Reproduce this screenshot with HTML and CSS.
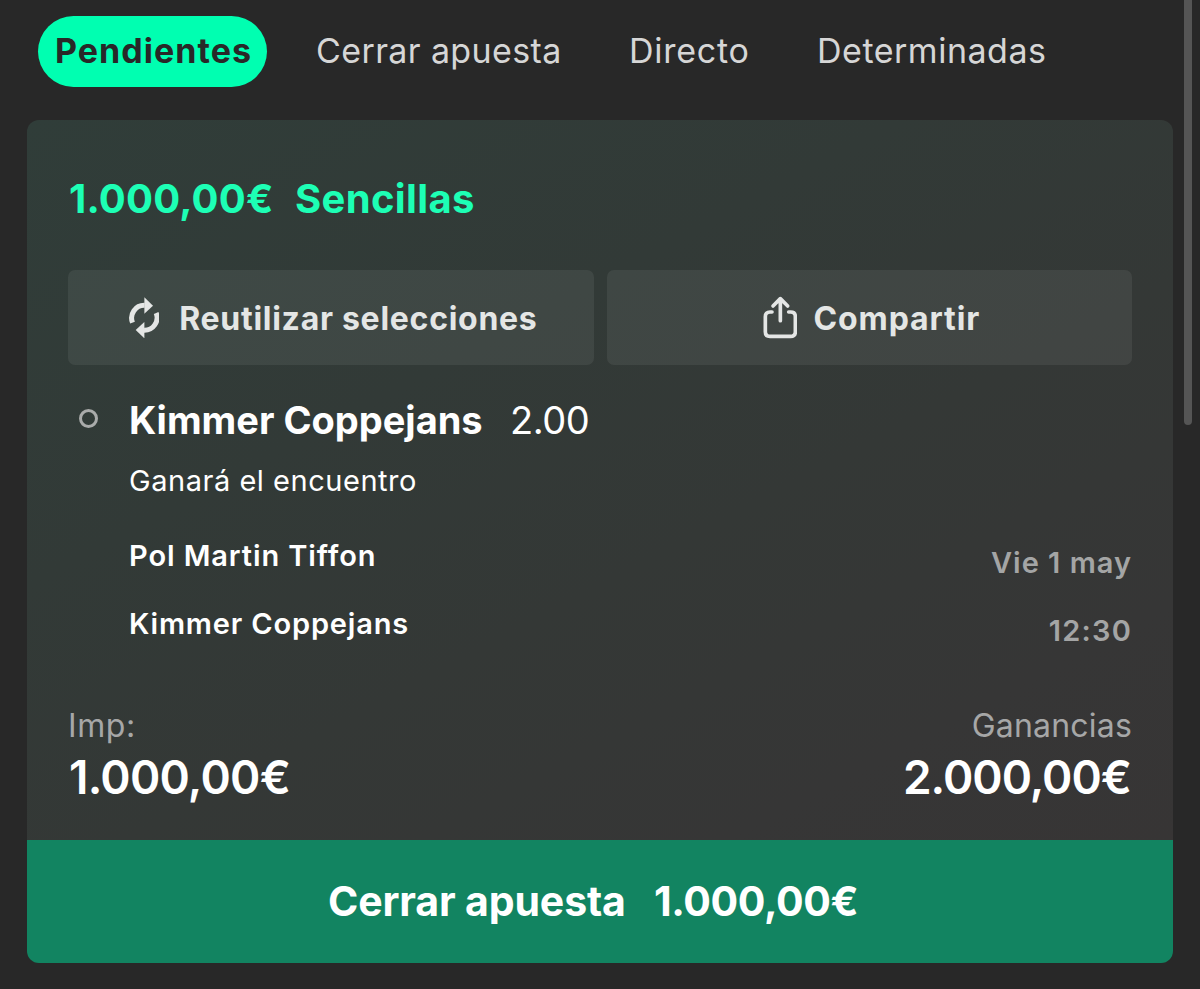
FILE: index.html
```html
<!DOCTYPE html>
<html lang="es">
<head>
<meta charset="utf-8">
<title>Mis apuestas</title>
<link rel="stylesheet" href="styles.css">
</head>
<body>
<div class="scrollbar"></div>
<nav class="tabs">
  <a class="tab tab-active">Pendientes</a>
  <a class="tab tab-close">Cerrar apuesta</a>
  <a class="tab tab-live">Directo</a>
  <a class="tab tab-settled">Determinadas</a>
</nav>
<main class="card">
  <div class="card-body">
    <h1 class="title"><span class="title-amount">1.000,00€</span><span class="title-type">Sencillas</span></h1>
    <div class="actions">
      <button class="action">
        <svg class="icon-reuse" viewBox="54 36 92 124" fill="currentColor">
          <path d="M64.500 113A38 38 0 0 1 101 61" fill="none" stroke="currentColor" stroke-width="15"/>
          <path d="M100 37L126 62L100 86Z"/>
          <path d="M135.500 84A38 38 0 0 1 99 136" fill="none" stroke="currentColor" stroke-width="15"/>
          <path d="M100 160L74 135L100 111Z"/>
        </svg>
        <span class="reuse-text">Reutilizar selecciones</span>
      </button>
      <button class="action">
        <svg class="icon-share" viewBox="68 50 104 128" fill="none" stroke="currentColor" stroke-width="11" stroke-linecap="round" stroke-linejoin="round">
          <path d="M95 98H89Q75 98 75 112V157Q75 171 89 171H151Q165 171 165 157V112Q165 98 151 98H145"/>
          <path d="M120 124V58M98 80L120 58L142 80"/>
        </svg>
        <span class="share-text">Compartir</span>
      </button>
    </div>
    <section class="selection">
      <span class="status"></span>
      <div class="details">
        <div class="pick"><b class="pick-name">Kimmer Coppejans</b><span class="odds">2.00</span></div>
        <div class="market">Ganará el encuentro</div>
        <div class="fixture">
          <div class="teams"><div class="team-home">Pol Martin Tiffon</div><div class="team-away">Kimmer Coppejans</div></div>
          <div class="times"><div class="date">Vie 1 may</div><div class="hour">12:30</div></div>
        </div>
      </div>
    </section>
    <section class="totals">
      <div><div class="label label-stake">Imp:</div><div class="value value-stake">1.000,00€</div></div>
      <div class="returns"><div class="label label-returns">Ganancias</div><div class="value value-returns">2.000,00€</div></div>
    </section>
  </div>
  <button class="cashout"><span class="cashout-text">Cerrar apuesta</span><span class="cashout-amount">1.000,00€</span></button>
</main>
</body>
</html>
```
FILE: styles.css
```css
* { box-sizing: border-box; }

body {
  margin: 0;
  height: 989px;
  overflow: hidden;
  background: #282828;
  color: #fff;
  font-family: Inter, "Liberation Sans", sans-serif;
  white-space: nowrap;
}

button {
  border: 0;
  padding: 0;
  color: inherit;
  font: inherit;
}

.scrollbar {
  position: absolute;
  top: 0;
  left: 1184px;
  width: 8px;
  height: 425px;
  border-radius: 0 0 4px 4px;
  background: #555;
}

.tabs {
  display: flex;
  height: 120px;
  padding: 16px 0 0 38px;
  font-size: 34px;
  line-height: 69px;
  color: #d6d6d6;
}

.tab { height: 71px; }

.tab-active {
  width: 229px;
  padding-left: 17px;
  border-radius: 36px;
  background: #00ffb1;
  color: #282828;
  font-weight: 700;
  letter-spacing: 1.05px;
}

.tab-close { width: 314px; padding-left: 49px; letter-spacing: .38px; }
.tab-live { width: 188px; padding-left: 48px; letter-spacing: .75px; }
.tab-settled { padding-left: 48px; letter-spacing: .51px; }

.card {
  width: 1146px;
  height: 843px;
  margin-left: 27px;
  border-radius: 12px;
  overflow: hidden;
}

.card-body {
  height: 720px;
  padding: 55px 41px 0;
  background: linear-gradient(152deg, #303d39 0%, #323a37 35%, #343836 58%, #363636 82%, #373535 100%);
}

.title {
  display: flex;
  margin: 0;
  color: #1dffb5;
  font-size: 40px;
  line-height: 48px;
  font-weight: 700;
}

.title-amount { width: 227px; padding-left: 1px; letter-spacing: .2px; }
.title-type { letter-spacing: .35px; }

.actions {
  display: grid;
  grid-template-columns: 526px 525px;
  gap: 13px;
  margin-top: 47px;
}

.action {
  display: flex;
  align-items: center;
  justify-content: center;
  height: 95px;
  padding-left: 4px;
  border-radius: 7px;
  background: rgba(255, 255, 255, .065);
  color: #e4e6e5;
  font-size: 32px;
  line-height: 60px;
  font-weight: 700;
}

.icon-reuse { width: 30.7px; height: 41.3px; margin-right: 20px; }
.icon-share { width: 34.7px; height: 42.7px; margin-right: 16px; }
.reuse-text { padding-top: 2px; letter-spacing: .72px; }
.share-text { padding-top: 2px; letter-spacing: .92px; }

.selection { display: flex; margin-top: 31px; }

.status {
  width: 19px;
  height: 19px;
  margin: 13px 31px 0 11px;
  border: 3px solid #a9abaa;
  border-radius: 50%;
}

.details { flex: 1; }
.pick { display: flex; font-size: 38px; line-height: 48px; }
.pick-name { width: 381px; font-weight: 700; }
.odds { letter-spacing: -.5px; }

.market {
  margin-top: 17px;
  font-size: 29px;
  line-height: 40px;
  letter-spacing: .53px;
}

.fixture {
  display: flex;
  justify-content: space-between;
  height: 136px;
  margin-top: 21px;
  font-size: 29px;
  line-height: 68px;
  font-weight: 600;
}

.team-home { letter-spacing: .9px; }
.team-away { letter-spacing: .83px; }
.times { padding-top: 7px; text-align: right; color: #a4a5a5; }
.date { letter-spacing: 1px; }
.hour { letter-spacing: 1.2px; }

.totals { display: flex; justify-content: space-between; margin-top: 48px; }
.returns { text-align: right; }
.label { font-size: 32px; line-height: 39px; color: #a6a7a7; }
.label-stake { letter-spacing: .6px; }
.label-returns { letter-spacing: .2px; }
.value { margin-top: 4px; font-size: 46px; line-height: 56px; font-weight: 600; }
.value-stake { padding-left: 1px; letter-spacing: -.75px; }
.value-returns { letter-spacing: -1px; padding-right: 1px; }

.cashout {
  display: flex;
  width: 1146px;
  height: 123px;
  padding-left: 301px;
  background: #128461;
  font-size: 41px;
  line-height: 122px;
  font-weight: 700;
  text-align: left;
}

.cashout-text { width: 326px; letter-spacing: -.14px; }
.cashout-amount { letter-spacing: -.4px; }
```
